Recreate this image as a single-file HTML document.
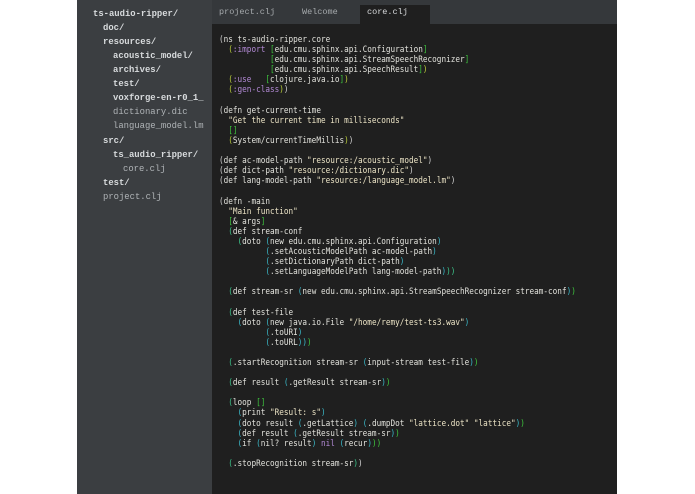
<!DOCTYPE html>
<html><head><style>
body{margin:0;width:695px;height:494px;background:#fff;position:relative;overflow:hidden}
#side{position:absolute;left:77px;top:0;width:135px;height:494px;background:#3b3e41;font-family:"Liberation Mono",monospace;font-size:8.9px;color:#d8dbdd}
#side div{position:absolute;white-space:pre;line-height:14px}
.bd{font-weight:bold}
.dim{color:#b0b4b7}
#tabs{position:absolute;left:212px;top:0;width:405px;height:24px;background:#35383b;font-family:"Liberation Mono",monospace;font-size:8.5px;color:#a6aaad}
#tabs div{position:absolute;top:5px;line-height:14px}
#act{position:absolute;left:148px;top:5px;width:70px;height:19px;background:#1f1f1f}
#ed{position:absolute;left:212px;top:24px;width:405px;height:470px;background:#1f1f1f}
pre{position:absolute;left:219px;top:35px;margin:0;font-family:"DejaVu Sans Mono",monospace;font-size:8.8px;line-height:10.1px;color:#e2e2dc;transform:scaleX(0.875);transform-origin:0 0}
.a{color:#d0d0d0}.b{color:#b8cc3a}.c{color:#3cc48a}.d{color:#3ab8c8}.g{color:#3ec43e}.k{color:#b38ad6}.s{color:#ece4c6}
</style></head><body>
<div id="side">
<div class="bd" style="left:16px;top:7px">ts-audio-ripper/</div>
<div class="bd" style="left:26px;top:21px">doc/</div>
<div class="bd" style="left:26px;top:35px">resources/</div>
<div class="bd" style="left:36px;top:49px">acoustic_model/</div>
<div class="bd" style="left:36px;top:63px">archives/</div>
<div class="bd" style="left:36px;top:77px">test/</div>
<div class="bd" style="left:36px;top:91px">voxforge-en-r0_1_</div>
<div class="dim" style="left:36px;top:105px">dictionary.dic</div>
<div class="dim" style="left:36px;top:119px">language_model.lm</div>
<div class="bd" style="left:26px;top:134px">src/</div>
<div class="bd" style="left:36px;top:148px">ts_audio_ripper/</div>
<div class="dim" style="left:46px;top:162px">core.clj</div>
<div class="bd" style="left:26px;top:176px">test/</div>
<div class="dim" style="left:26px;top:190px">project.clj</div>
</div>
<div id="tabs"><div id="act"></div>
<div style="left:7px">project.clj</div>
<div style="left:90px">Welcome</div>
<div style="left:155px;color:#d8dadc">core.clj</div>
</div>
<div id="ed"></div>
<pre><span class="a">(</span>ns ts-audio-ripper.core
  <span class="b">(</span><span class="k">:import</span> <span class="g">[</span>edu.cmu.sphinx.api.Configuration<span class="g">]</span>
           <span class="g">[</span>edu.cmu.sphinx.api.StreamSpeechRecognizer<span class="g">]</span>
           <span class="g">[</span>edu.cmu.sphinx.api.SpeechResult<span class="g">]</span><span class="b">)</span>
  <span class="b">(</span><span class="k">:use</span>   <span class="g">[</span>clojure.java.io<span class="g">]</span><span class="b">)</span>
  <span class="b">(</span><span class="k">:gen-class</span><span class="b">)</span><span class="a">)</span>

<span class="a">(</span>defn get-current-time
  <span class="s">"Get the current time in milliseconds"</span>
  <span class="g">[]</span>
  <span class="b">(</span>System/currentTimeMillis<span class="b">)</span><span class="a">)</span>

<span class="a">(</span>def ac-model-path <span class="s">"resource:/acoustic_model"</span><span class="a">)</span>
<span class="a">(</span>def dict-path <span class="s">"resource:/dictionary.dic"</span><span class="a">)</span>
<span class="a">(</span>def lang-model-path <span class="s">"resource:/language_model.lm"</span><span class="a">)</span>

<span class="a">(</span>defn -main
  <span class="s">"Main function"</span>
  <span class="g">[</span>&amp; args<span class="g">]</span>
  <span class="c">(</span>def stream-conf
    <span class="c">(</span>doto <span class="d">(</span>new edu.cmu.sphinx.api.Configuration<span class="d">)</span>
          <span class="d">(</span>.setAcousticModelPath ac-model-path<span class="d">)</span>
          <span class="d">(</span>.setDictionaryPath dict-path<span class="d">)</span>
          <span class="d">(</span>.setLanguageModelPath lang-model-path<span class="d">)</span><span class="c">))</span>

  <span class="c">(</span>def stream-sr <span class="d">(</span>new edu.cmu.sphinx.api.StreamSpeechRecognizer stream-conf<span class="d">)</span><span class="g">)</span>

  <span class="c">(</span>def test-file
    <span class="d">(</span>doto <span class="d">(</span>new java.io.File <span class="s">"/home/remy/test-ts3.wav"</span><span class="d">)</span>
          <span class="d">(</span>.toURI<span class="d">)</span>
          <span class="d">(</span>.toURL<span class="d">)</span><span class="d">)</span><span class="g">)</span>

  <span class="c">(</span>.startRecognition stream-sr <span class="d">(</span>input-stream test-file<span class="d">)</span><span class="g">)</span>

  <span class="c">(</span>def result <span class="d">(</span>.getResult stream-sr<span class="d">)</span><span class="g">)</span>

  <span class="c">(</span>loop <span class="g">[]</span>
    <span class="d">(</span>print <span class="s">"Result: s"</span><span class="d">)</span>
    <span class="d">(</span>doto result <span class="d">(</span>.getLattice<span class="d">)</span> <span class="d">(</span>.dumpDot <span class="s">"lattice.dot"</span> <span class="s">"lattice"</span><span class="d">)</span><span class="g">)</span>
    <span class="d">(</span>def result <span class="d">(</span>.getResult stream-sr<span class="d">)</span><span class="g">)</span>
    <span class="d">(</span>if <span class="d">(</span>nil? result<span class="d">)</span> <span class="k">nil</span> <span class="d">(</span>recur<span class="d">)</span><span class="g">))</span>

  <span class="c">(</span>.stopRecognition stream-sr<span class="c">)</span><span class="a">)</span></pre>
</body></html>
